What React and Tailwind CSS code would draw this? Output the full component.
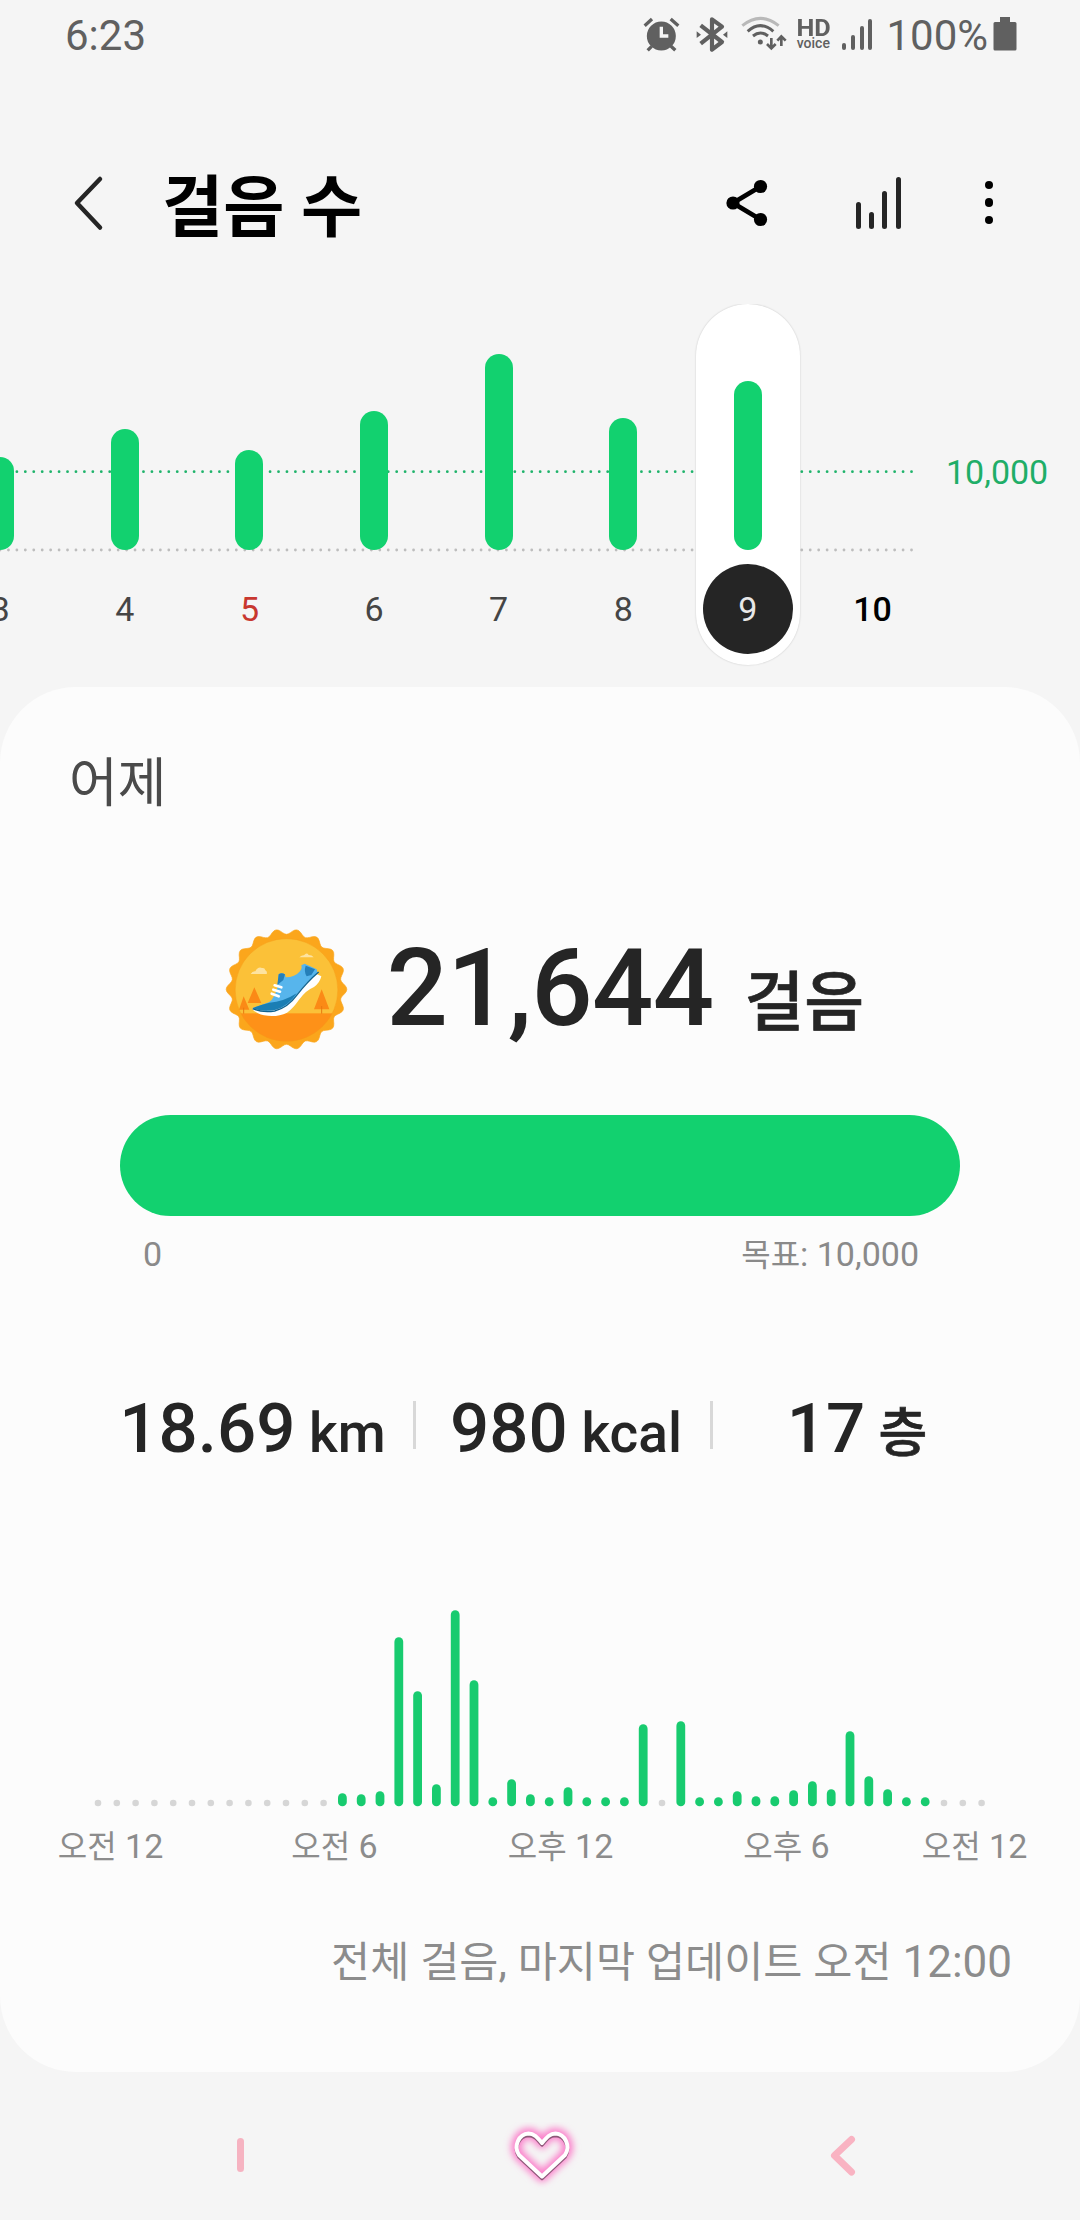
const days = [
  { day: "3", height: 93 },
  { day: "4", height: 121 },
  { day: "5", height: 100, holiday: true },
  { day: "6", height: 139 },
  { day: "7", height: 196 },
  { day: "8", height: 132 },
  { day: "9", height: 169, selected: true },
  { day: "10", height: 0, today: true },
];

// one entry per half hour, 0 = no steps
const halfHours = [
  0, 0, 0, 0, 0, 0, 0, 0, 0, 0, 0, 0, 0, 13, 12, 15, 169, 115, 22, 196, 126, 9, 27, 12, 9, 19, 9, 9, 9, 82, 0, 85, 9,
  9, 15, 10, 10, 16, 25, 17, 75, 30, 17, 9, 9, 0, 0, 0,
];

const hourLabels = [
  { period: "오전", hour: 12, width: "w-[221px]" },
  { period: "오전", hour: 6, width: "w-[227px]" },
  { period: "오후", hour: 12, width: "w-[225px]" },
  { period: "오후", hour: 6, width: "w-[227px]" },
  { period: "오전", hour: 12, width: "w-[149px]" },
];

const badgePoints = Array.from({ length: 180 }, (_, i) => {
  const angle = (i * 2 * Math.PI) / 180;
  const radius = 173 + 8 * Math.cos(angle * 18);
  return `${(259.5 + radius * Math.cos(angle)).toFixed(1)},${(265 + radius * Math.sin(angle)).toFixed(1)}`;
}).join(" ");

function StatusBar() {
  return (
    <div className="flex h-[70px] items-start justify-between pl-[65px] pr-[63px] pt-[11px] text-[#606060]">
      <span className="text-[42px] leading-[49px]">6:23</span>
      <div className="flex items-start">
        <svg className="mt-[5px] h-[38px] w-[40px]" viewBox="66 48 120 114" fill="none" stroke="#606060">
          <circle cx="124" cy="108" r="43.500" fill="#606060" stroke="none" />
          <path d="M74 77 L96 57 M152 57 L175 77" strokeWidth="10" />
          <path d="M95 139 L83 151 M153 139 L166 151" strokeWidth="10" />
          <path d="M124 80 V108 H145" stroke="#f5f5f5" strokeWidth="10" />
        </svg>
        <svg className="ml-[12.500px] mt-[5px] h-[38px] w-[34px]" viewBox="222 48 102 114" fill="none" stroke="#606060">
          <path d="M239 76 L303 126 L273 149 V58 L303 80 L239 131" strokeWidth="12.500" strokeLinejoin="round" />
          <path d="M227 94 L240 104 L227 114 Z M319 94 L306 104 L319 114 Z" fill="#606060" stroke="none" />
        </svg>
        <svg className="ml-[11.500px] mt-[5px] h-[36px] w-[48px]" viewBox="362 48 144 108" fill="none" stroke="#606060">
          <path d="M369 77 Q423 33 478 77" stroke="#b9b9b9" strokeWidth="9" />
          <path d="M385 94 Q423 60 462 94" strokeWidth="9" />
          <path d="M401 108 Q423 90 446 108" strokeWidth="9" />
          <circle cx="423" cy="126" r="7.500" fill="#606060" stroke="none" />
          <path d="M456 114 V145 M443 132 L456 145 L469 132 M486 138 V110 M474 122 L486 109 L499 122" strokeWidth="8" />
        </svg>
        <div className="ml-[6px] mt-[9px] flex w-[38px] flex-col items-center">
          <span className="origin-center scale-x-110 text-[23px] font-bold leading-[18px]">HD</span>
          <span className="text-[14px] font-medium leading-[10px]">voice</span>
        </div>
        <div className="ml-[10px] mt-2 flex h-[31px] items-end gap-[4.700px]">
          <span className="h-[7px] w-1 rounded-full bg-[#606060]" />
          <span className="h-[15px] w-1 rounded-full bg-[#606060]" />
          <span className="h-[24px] w-1 rounded-full bg-[#606060]" />
          <span className="h-[31px] w-1 rounded-full bg-[#606060]" />
        </div>
        <span className="ml-[14px] text-[42px] leading-[49px]">100%</span>
        <svg className="ml-[5px] mt-[5px] h-[35px] w-[24px]" viewBox="0 0 24 35">
          <path d="M7 1 h10 v5 h5 q1.500 0 1.500 1.500 V33 q0 1.500 -1.500 1.500 H2 q-1.500 0 -1.500 -1.500 V7.500 Q0.500 6 2 6 h5 Z" fill="#606060" />
        </svg>
      </div>
    </div>
  );
}

function Header() {
  return (
    <header className="flex h-[234px] items-start pl-[71px] pt-[103px]">
      <svg className="h-[60px] w-[34px]" viewBox="0 0 34 60" fill="none">
        <path d="M29 6 L6 30 L29 54.500" stroke="#252525" strokeWidth="4.500" strokeLinecap="round" strokeLinejoin="round" />
      </svg>
      <h1 className="ml-[57px] mt-[3px] w-[563px] text-[66.500px] font-bold leading-[64px] text-black">걸음 수</h1>
      <svg className="mt-2 h-[44px] w-[44px] overflow-visible" viewBox="0 0 44 44" fill="#000">
        <path d="M35.500 5.500 L8 22 L35.500 38.500" fill="none" stroke="#000" strokeWidth="4.800" />
        <circle cx="8" cy="22" r="6.600" />
        <circle cx="35.500" cy="5.500" r="6.600" />
        <circle cx="35.500" cy="38.500" r="6.600" />
      </svg>
      <div className="ml-[86.500px] mt-[4px] flex h-[52px] items-end gap-[8.400px]">
        <span className="h-[27px] w-[5px] rounded-full bg-[#252525]" />
        <span className="h-[17px] w-[5px] rounded-full bg-[#252525]" />
        <span className="h-[38px] w-[5px] rounded-full bg-[#252525]" />
        <span className="h-[52px] w-[5px] rounded-full bg-[#252525]" />
      </div>
      <div className="ml-[84px] mt-[7.500px] flex flex-col gap-[9.200px]">
        <span className="h-[8.500px] w-[8.500px] rounded-full bg-black" />
        <span className="h-[8.500px] w-[8.500px] rounded-full bg-black" />
        <span className="h-[8.500px] w-[8.500px] rounded-full bg-black" />
      </div>
    </header>
  );
}

function DayColumn({ day, height, holiday, selected, today }) {
  let color = "text-[#454545]";
  if (holiday) color = "text-[#c8372f]";
  if (today) color = "font-medium text-black";
  if (selected) color = "bg-[#252525] text-[#e8e8e8]";

  return (
    <div className="flex w-[124.600px] shrink-0 justify-center">
      <div
        className={`flex h-[361px] w-[104px] flex-col items-center rounded-full ${
          selected ? "bg-white shadow-[0_0_2px_rgba(0,0,0,0.2)]" : ""
        }`}
      >
        <div className="flex h-[246px] items-end">
          <div className="w-[28px] rounded-full bg-[#12d16f]" style={{ height }} />
        </div>
        <span className={`mt-[14px] h-[90px] w-[90px] rounded-full text-center text-[34px] leading-[90px] ${color}`}>
          {day}
        </span>
      </div>
    </div>
  );
}

function WeekChart() {
  return (
    <section className="relative flex h-[383px] items-start overflow-hidden">
      <svg className="absolute left-0 top-0 h-[260px] w-[920px]" fill="none" strokeLinecap="round" strokeWidth="2.800">
        <path d="M0 167.700 H913" stroke="#1fb36b" strokeDasharray="0 8.440" />
        <path d="M0 246 H913" stroke="#bdbdbd" strokeDasharray="0 8.440" />
      </svg>
      <div className="relative -ml-[62px] flex w-[1008px] shrink-0">
        {days.map((item) => (
          <DayColumn key={item.day} {...item} />
        ))}
      </div>
      <span className="mt-[148px] shrink-0 text-[34px] leading-[40px] text-[#1fae68]">10,000</span>
    </section>
  );
}

function ShoeBadge() {
  return (
    <svg className="h-[125px] w-[125px] shrink-0" viewBox="72 78 375 375">
      <defs>
        <clipPath id="badge-inner">
          <circle cx="259.500" cy="267" r="154" />
        </clipPath>
      </defs>
      <polygon points={badgePoints} fill="#fba61c" stroke="#fba61c" strokeWidth="2" strokeLinejoin="round" />
      <g clipPath="url(#badge-inner)">
        <rect x="100" y="100" width="320" height="240" fill="#fbc138" />
        <rect x="100" y="337" width="320" height="100" fill="#fe9118" />
        <path d="M152 219 Q157 210 166 211 Q174 196 186 201 Q194 199 196 208 Q203 212 200 219 Z" fill="#fde3a0" />
        <path d="M298 169 Q306 162 312 163 Q320 153 326 162 Q336 162 341 169 Z" fill="#fde3a0" />
        <path d="M163 259 L184 306 H143 Z M131 286 L148 326 H117 Z M365 265 L388 325 H342 Z" fill="#fb8a16" />
        <path d="M131 320 V338 M365 315 V338" stroke="#e87a10" strokeWidth="3" />
      </g>
      <circle cx="259.500" cy="267" r="154" fill="none" stroke="#f49b16" strokeWidth="2" opacity="0.600" />
      <path
        d="M157 323 Q164 336 192 343 Q230 350 261 335 Q280 321 297 296 Q319 267 342 258 Q360 245 364 226 L350 219 Q315 243 285 282 Q260 315 222 325 Q188 331 161 320 Z"
        fill="#ffffff"
      />
      <path
        d="M158 321 Q180 314 208 303 Q224 290 232 260 L236 220 Q244 214 255 220 L257 229 Q285 229 300 211 Q307 202 304 193 L314 188 L350 205 L353 216 Q320 241 290 281 Q264 317 224 327 Q187 334 158 321 Z"
        fill="#57b5ec"
      />
      <path d="M158 321 Q180 312 208 305 Q250 303 290 277 Q264 317 224 327 Q187 334 158 321 Z" fill="#1b7eb4" />
      <path d="M236 220 Q244 214 255 220 L250 237 L232 252 Z M317 194 L345 205 L334 222 L320 226 Q311 212 317 194 Z" fill="#257fb9" />
      <path d="M224 253 L244 259 M220 266 L240 272 M215 278 L236 286" stroke="#ffffff" strokeWidth="8" strokeLinecap="round" />
      <path d="M356 213 Q322 242 290 283 Q264 319 224 330 Q188 336 158 323" fill="none" stroke="#10628f" strokeWidth="4" />
    </svg>
  );
}

function Stats() {
  return (
    <div className="mt-[114px] flex h-[80px] items-start pl-[91px] text-[69px] font-medium leading-[80px] text-[#252525]">
      <div className="w-[322px] whitespace-pre pl-px text-center">
        18.69<span className="text-[55px]"> km</span>
      </div>
      <div className="mt-[12px] h-[48px] w-[3px] bg-[#d8d8d8]" />
      <div className="w-[294px] whitespace-pre pl-1.5 text-center">
        980<span className="text-[55px]"> kcal</span>
      </div>
      <div className="mt-[12px] h-[48px] w-[3px] bg-[#d8d8d8]" />
      <div className="w-[288px] whitespace-pre text-center">
        17<span className="text-[53px] [-webkit-text-stroke:0.7px]"> 층</span>
      </div>
    </div>
  );
}

function DayChart() {
  return (
    <div className="mt-[140px]">
      <svg className="h-[200px] w-full" viewBox="0 0 1080 200">
        {halfHours.map((value, i) => {
          const x = 98 + i * 18.8;
          if (!value) return <circle key={i} cx={x} cy="194" r="3.300" fill="#d6d6d6" />;
          return <rect key={i} x={x - 4.4} y={197.3 - value} width="8.800" height={value} rx="4.400" fill="#18cb6f" />;
        })}
      </svg>
      <div className="flex pt-[17px] text-[34px] leading-[40px] text-[#8c8c8c]">
        {hourLabels.map((label, i) => (
          <span key={i} className={`${label.width} shrink-0 text-center`}>
            <span className="text-[32px]">{label.period}</span> {label.hour}
          </span>
        ))}
      </div>
    </div>
  );
}

function NavBar() {
  const heart =
    "M46 54.500 L23 33 C17 24 23 12 32.500 11.500 C38 11.500 41 15 46 21 C51 15 54 11.500 59.500 11.500 C69 12 75 24 69 33 Z";

  return (
    <nav className="flex h-[148px] items-start pl-[237px] pt-[50px]">
      <span className="mt-4 h-[34px] w-[7px] rounded-full bg-[#f6b3c1]" />
      <svg className="ml-[252px] h-[76px] w-[90px]" viewBox="0 0 90 76" fill="none" strokeLinejoin="round">
        <defs>
          <filter id="glow" x="-50%" y="-50%" width="200%" height="200%">
            <feGaussianBlur stdDeviation="3.500" />
          </filter>
        </defs>
        <path d={heart} stroke="#fb7fca" strokeWidth="11" filter="url(#glow)" />
        <path d={heart} stroke="#8d5878" strokeWidth="3.500" transform="translate(0 2)" />
        <path d={heart} stroke="#fff" strokeWidth="4" />
      </svg>
      <svg className="ml-[242px] mt-3 h-[44px] w-[30px]" viewBox="0 0 30 44" fill="none">
        <path d="M23.500 5.500 L6.500 21.500 L23.500 38" stroke="#f9b3c2" strokeWidth="7" strokeLinecap="round" strokeLinejoin="round" />
      </svg>
    </nav>
  );
}

export default function App() {
  return (
    <div
      lang="ko"
      className="flex h-[2220px] w-[1080px] flex-col overflow-hidden bg-[#f5f5f5] font-['Roboto','Noto_Sans_CJK_KR',sans-serif]"
    >
      <StatusBar />
      <Header />
      <WeekChart />
      <main className="h-[1385px] rounded-[76px] bg-[#fcfcfc]">
        <h2 className="pl-[69px] pt-[67px] text-[53px] leading-[60px] text-[#4a4a4a]">어제</h2>
        <div className="mt-[112px] flex h-[126px] items-center pl-[224px] text-[#252525]">
          <ShoeBadge />
          <div className="ml-[37.500px] mt-[13px] flex items-baseline whitespace-nowrap font-medium leading-[120px]">
            <span className="text-[108px] tracking-[-0.700px]">21,644</span>
            <span className="ml-[31px] text-[65px] [-webkit-text-stroke:0.7px]">걸음</span>
          </div>
        </div>
        <div className="ml-[120px] mt-[63px] h-[101px] w-[840px] rounded-full bg-[#12d16f]" />
        <div className="flex justify-between pl-[143px] pr-[161px] pt-[18px] text-[34px] leading-[40px] text-[#8a8a8a]">
          <span>0</span>
          <span>
            <span className="text-[32px]">목표</span>: 10,000
          </span>
        </div>
        <Stats />
        <DayChart />
        <p className="pr-[68px] pt-[69px] text-right text-[44px] leading-[52px] text-[#8c8c8c]">
          <span className="text-[42.500px] [word-spacing:0.400px]">전체 걸음, 마지막 업데이트 오전 </span>
          12:00
        </p>
      </main>
      <NavBar />
    </div>
  );
}
